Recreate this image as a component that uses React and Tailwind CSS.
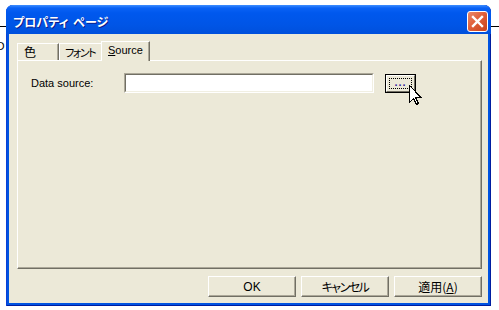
export default function App() {
  const jp = "font-['Noto_Sans_CJK_JP',sans-serif] [font-feature-settings:'palt'] whitespace-nowrap";
  const lat = "font-['Liberation_Sans','Noto_Sans_CJK_JP',sans-serif]";
  return (
    <div className={`w-[499px] h-[310px] bg-white relative overflow-hidden ${lat}`}>
      <div className="absolute left-0 top-[26px] w-[8px] h-px bg-black" />
      <div className="absolute right-0 top-[26px] w-[10px] h-px bg-black" />
      <span className="absolute left-[-4px] top-[41px] text-[11px] leading-none text-black">O</span>

      <div className="pt-[5px] pl-[6px]">
        <div className="relative w-[485px] h-[301px] rounded-t-[7px] bg-[#0053e1] flex flex-col shadow-[inset_1px_0_#0a3fd6,inset_-1px_0_#001ea0,inset_0_-1px_#001ea0]">
          {/* Title bar */}
          <div className="h-[29px] rounded-t-[7px] bg-[linear-gradient(to_bottom,#3e8eff_0px,#0a62f5_3px,#0058ee_8px,#0055e6_20px,#0050dc_29px)] flex items-center justify-between pl-[7px] pr-[3px] pt-[4px] shrink-0">
            <span className={`${jp} text-white font-bold text-[12px] leading-none [text-shadow:1px_1px_0_#0a1e8c] flex gap-[5px]`}>
              <span>プロパティ</span>
              <span>ページ</span>
            </span>
            <div className="w-[21px] h-[21px] rounded-[3px] border border-white bg-[linear-gradient(135deg,#e98a6c_0%,#e0603a_45%,#c8421b_100%)] flex items-center justify-center">
              <svg width="19" height="19" viewBox="0 0 19 19">
                <path d="M5 5 L14 14 M14 5 L5 14" stroke="white" strokeWidth="2.4" strokeLinecap="square" />
              </svg>
            </div>
          </div>

          {/* Client area */}
          <div className="flex-1 mx-[3px] mb-[3px] bg-[#ece9d8] flex flex-col pl-[8px] pr-[6px] pt-[7px]">
            {/* Tabs */}
            <div className="flex items-end h-[19px]">
              <div className="w-[42px] h-[17px] border-t border-l border-white border-r border-r-[#716f64] shadow-[inset_-1px_0_#aca899] pl-[6px] flex items-center">
                <span className={`${jp} text-[12px] leading-none text-black`}>色</span>
              </div>
              <div className="w-[42px] h-[17px] border-t border-l border-white pl-[5px] flex items-center overflow-hidden">
                <span className={`${jp} text-[11px] leading-none text-black tracking-[-1.5px]`}>フォント</span>
              </div>
              <div className="relative z-10 -mb-px w-[49px] h-[20px] bg-[#ece9d8] border-t border-l border-white border-r border-r-[#716f64] shadow-[inset_-1px_0_#aca899] pl-[6px] pb-[2px] flex items-center">
                <span className="text-[11px] leading-none text-black">
                  <span className="underline underline-offset-[1px]">S</span>ource
                </span>
              </div>
            </div>

            {/* Panel */}
            <div className="h-[209px] border-t border-l border-white border-r border-b border-r-[#716f64] border-b-[#716f64] shadow-[inset_-1px_-1px_#aca899] pl-[13px] pt-[12px]">
              <div className="flex items-center">
                <span className="w-[93px] text-[11px] leading-none text-black">Data source:</span>
                <div className="w-[250px] h-[20px] border-t border-l border-t-[#aca899] border-l-[#aca899] border-b border-r border-b-white border-r-white">
                  <div className="w-full h-full bg-white border-t border-l border-t-[#716f64] border-l-[#716f64] border-b border-r border-b-[#f1efe2] border-r-[#f1efe2]" />
                </div>
                <div className="relative ml-[11px] w-[31px] h-[19px] border border-black">
                  <div className="w-full h-full border-t border-l border-t-white border-l-white border-b border-r border-b-[#716f64] border-r-[#716f64] bg-[#ece9d8] p-[2px]">
                    <div className="w-full h-full border border-dotted border-black flex items-center justify-center">
                      <span className="text-[11px] leading-none text-[#3a2a9a] font-bold tracking-[1px] -mt-[2px]">...</span>
                    </div>
                  </div>
                  <svg className="absolute left-[23px] top-[10px] z-20" width="13" height="21" viewBox="0 0 13 21" shapeRendering="crispEdges">
                    <path d="M0.5 0.5 V17.5 L4.5 13.5 L7.5 19.5 L9.5 18.5 L6.5 12.5 H12 Z" fill="white" stroke="black" strokeWidth="1" />
                  </svg>
                </div>
              </div>
            </div>

            {/* Buttons */}
            <div className="flex justify-end gap-[5px] mt-[7px]">
              {[
                <span key="ok" className="text-[12px] leading-none">OK</span>,
                <span key="c" className={`${jp} text-[12px] leading-none tracking-[-1.5px]`}>キャンセル</span>,
                <span key="a" className={`${jp} text-[12px] leading-none`}>適用(<span className="underline">A</span>)</span>,
              ].map((c, i) => (
                <div key={i} className="w-[88px] h-[21px] border-t border-l border-t-white border-l-white border-b border-r border-b-[#716f64] border-r-[#716f64] shadow-[inset_-1px_-1px_#aca899] flex items-center justify-center text-black">
                  {c}
                </div>
              ))}
            </div>
          </div>
        </div>
      </div>
    </div>
  );
}
